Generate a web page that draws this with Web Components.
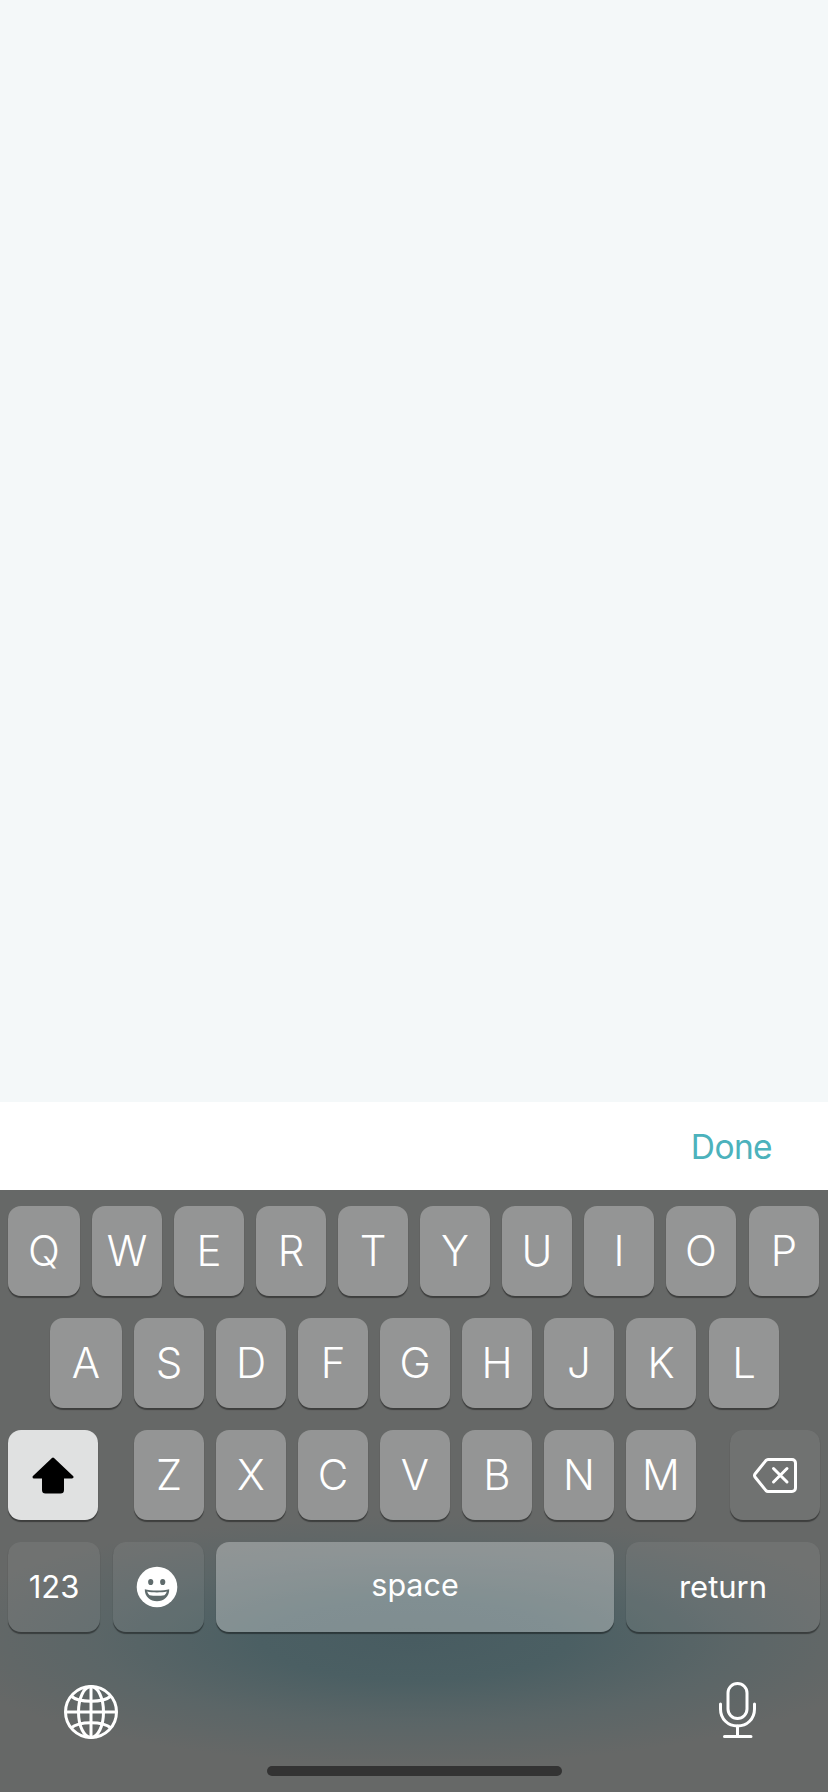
<!DOCTYPE html>
<html>
<head>
<meta charset="utf-8">
<title>Keyboard</title>
<style>
    html, body { margin: 0; padding: 0; background: #f4f8f9; }
</style>
</head>
<body>
<phone-screen>
    <done-bar>Done</done-bar>
    <key-board>
        <key-row>
            <kb-key style="--w:72px">Q</kb-key><kb-key>W</kb-key><kb-key>E</kb-key><kb-key>R</kb-key><kb-key>T</kb-key><kb-key>Y</kb-key><kb-key>U</kb-key><kb-key>I</kb-key><kb-key>O</kb-key><kb-key style="--ml:1px">P</kb-key>
        </key-row>
        <key-row style="--pad:50px">
            <kb-key style="--w:72px">A</kb-key><kb-key>S</kb-key><kb-key>D</kb-key><kb-key>F</kb-key><kb-key>G</kb-key><kb-key>H</kb-key><kb-key>J</kb-key><kb-key>K</kb-key><kb-key style="--ml:1px">L</kb-key>
        </key-row>
        <key-row>
            <kb-key shift style="--w:90px">
                <svg width="42" height="37" viewBox="0 0 42 37"><path d="M21 2 L40 20 H30.5 V33 a2 2 0 0 1 -2 2 H13.5 a2 2 0 0 1 -2 -2 V20 H2 Z" fill="#000" stroke="#000" stroke-width="3" stroke-linejoin="round"/></svg>
            </kb-key>
            <kb-key style="--ml:24px">Z</kb-key><kb-key>X</kb-key><kb-key>C</kb-key><kb-key>V</kb-key><kb-key>B</kb-key><kb-key>N</kb-key><kb-key>M</kb-key>
            <kb-key fn style="--w:90px;--ml:22px">
                <svg width="44" height="35" viewBox="0 0 44 35" fill="none" stroke="#fff" stroke-width="3" stroke-linejoin="round" stroke-linecap="round"><path d="M15 1.5 H39 a3.5 3.5 0 0 1 3.5 3.5 V30 a3.5 3.5 0 0 1 -3.5 3.5 H15 a3 3 0 0 1 -2 -.9 L2.2 19.3 a3 3 0 0 1 0 -3.6 L13 2.4 a3 3 0 0 1 2 -.9 Z"/><path d="M20.5 10.5 L34 24 M34 10.5 L20.5 24"/></svg>
            </kb-key>
        </key-row>
        <key-row>
            <kb-key fn small style="--w:92px;padding-bottom:2px">123</kb-key>
            <kb-key fn style="--w:91px;--ml:1px">
                <svg width="42" height="42" viewBox="0 0 42 42" style="margin-left:-3px"><circle cx="21" cy="21" r="20.3" fill="#fff"/><ellipse cx="14.7" cy="16" rx="2.6" ry="3.1" fill="#5f6b6c"/><ellipse cx="26.7" cy="16" rx="2.6" ry="3.1" fill="#5f6b6c"/><path d="M8.8 23.2 C14 25 28 25 33.2 23.2 C33.6 30.5 27.5 35.2 21 35.2 C14.5 35.2 8.4 30.5 8.8 23.2 Z" fill="#5f6b6c"/><path d="M11.2 25.6 C16 26.8 26 26.8 30.8 25.6 C30.2 27.3 29.4 28.5 28.4 29.2 C24 30 18 30 13.6 29.2 C12.6 28.5 11.8 27.3 11.2 25.6 Z" fill="#fff"/></svg>
            </kb-key>
            <kb-key small style="--w:398px;--fs:30.5px;padding-bottom:3px">space</kb-key>
            <kb-key fn small style="--w:194px;padding-bottom:2px">return</kb-key>
        </key-row>
        <system-row></system-row>
    </key-board>
</phone-screen>

<script>
(function () {
    // page frame: empty content area on top, bar and keyboard at the bottom
    class PhoneScreen extends HTMLElement {
        constructor() {
            super();
            this.attachShadow({ mode: "open" }).innerHTML = `
<style>
    :host { display: flex; flex-direction: column; justify-content: flex-end; width: 828px; height: 1792px; background: #f4f8f9; }
</style>
<slot></slot>`;
        }
    }

    class DoneBar extends HTMLElement {
        constructor() {
            super();
            this.attachShadow({ mode: "open" }).innerHTML = `
<style>
    :host { display: flex; justify-content: flex-end; align-items: center; box-sizing: border-box; height: 88px; padding: 2px 56px 0 0; background: #fff;
            font: 400 33.5px "Inter", "Liberation Sans", sans-serif; letter-spacing: -0.6px; color: #4cb2bc; }
</style>
<span><slot></slot></span>`;
        }
    }

    class KeyBoard extends HTMLElement {
        constructor() {
            super();
            this.attachShadow({ mode: "open" }).innerHTML = `
<style>
    :host { display: flex; flex-direction: column; gap: 22px; height: 602px; box-sizing: border-box; padding-top: 16px;
            background: radial-gradient(ellipse 480px 125px at 414px 450px, #485c61 0%, #4b5f63 32%, rgba(88,101,103,.8) 66%, rgba(102,104,103,0) 100%), #666867; }
</style>
<slot></slot>`;
        }
    }

    class KeyRow extends HTMLElement {
        constructor() {
            super();
            this.attachShadow({ mode: "open" }).innerHTML = `
<style>
    :host { display: flex; gap: 12px; padding-left: var(--pad, 8px); }
</style>
<slot></slot>`;
        }
    }

    class KbKey extends HTMLElement {
        constructor() {
            super();
            this.attachShadow({ mode: "open" }).innerHTML = `
<style>
    :host { display: flex; align-items: center; justify-content: center; flex: none; box-sizing: border-box;
            width: var(--w, 70px); height: 90px; margin-left: var(--ml, 0); border-radius: 13px;
            background: rgba(255,255,255,.3); box-shadow: 0 1.5px 1px rgba(0,0,0,.4);
            color: #fff; font: 350 42px/1 "Inter", "Liberation Sans", sans-serif; }
    :host([fn]) { background: rgba(255,255,255,.07); }
    :host([shift]) { background: #e0e1e1; }
    :host([small]) { font-size: var(--fs, 31px); font-weight: 400; }
</style>
<slot></slot>`;
        }
    }

    // globe and mic row plus the home indicator
    class SystemRow extends HTMLElement {
        constructor() {
            super();
            this.attachShadow({ mode: "open" }).innerHTML = `
<style>
    :host { display: flex; flex-direction: column; }
    .icons { display: flex; justify-content: space-between; align-items: flex-start; padding: 28px 72px 0 64px; }
    .globe { margin-top: 3px; }
    .home { width: 295px; height: 10px; margin: 27px auto 0; border-radius: 5px; background: #333; }
    svg { display: block; }
</style>
<div class="icons">
    <svg class="globe" width="54" height="54" viewBox="0 0 54 54" fill="none" stroke="#fff" stroke-width="3">
        <circle cx="27" cy="27" r="25.5"/>
        <ellipse cx="27" cy="27" rx="12.5" ry="25.5"/>
        <path d="M27 1.5 V52.5 M1.5 27 H52.5"/>
        <path d="M7 11 C15 18 39 18 47 11 M7 43 C15 36 39 36 47 43"/>
    </svg>
    <svg width="37" height="56" viewBox="0 0 37 56" fill="none" stroke="#fff" stroke-width="3" stroke-linecap="round">
        <rect x="9" y="1.5" width="19" height="35" rx="9.5"/>
        <path d="M1.5 22 V27 C1.5 37 9 44 18.5 44 C28 44 35.5 37 35.5 27 V22"/>
        <path d="M18.5 44 V54 M5.5 54.5 H32"/>
    </svg>
</div>
<div class="home"></div>`;
        }
    }

    customElements.define("phone-screen", PhoneScreen);
    customElements.define("done-bar", DoneBar);
    customElements.define("key-board", KeyBoard);
    customElements.define("key-row", KeyRow);
    customElements.define("kb-key", KbKey);
    customElements.define("system-row", SystemRow);
})();
</script>
</body>
</html>
